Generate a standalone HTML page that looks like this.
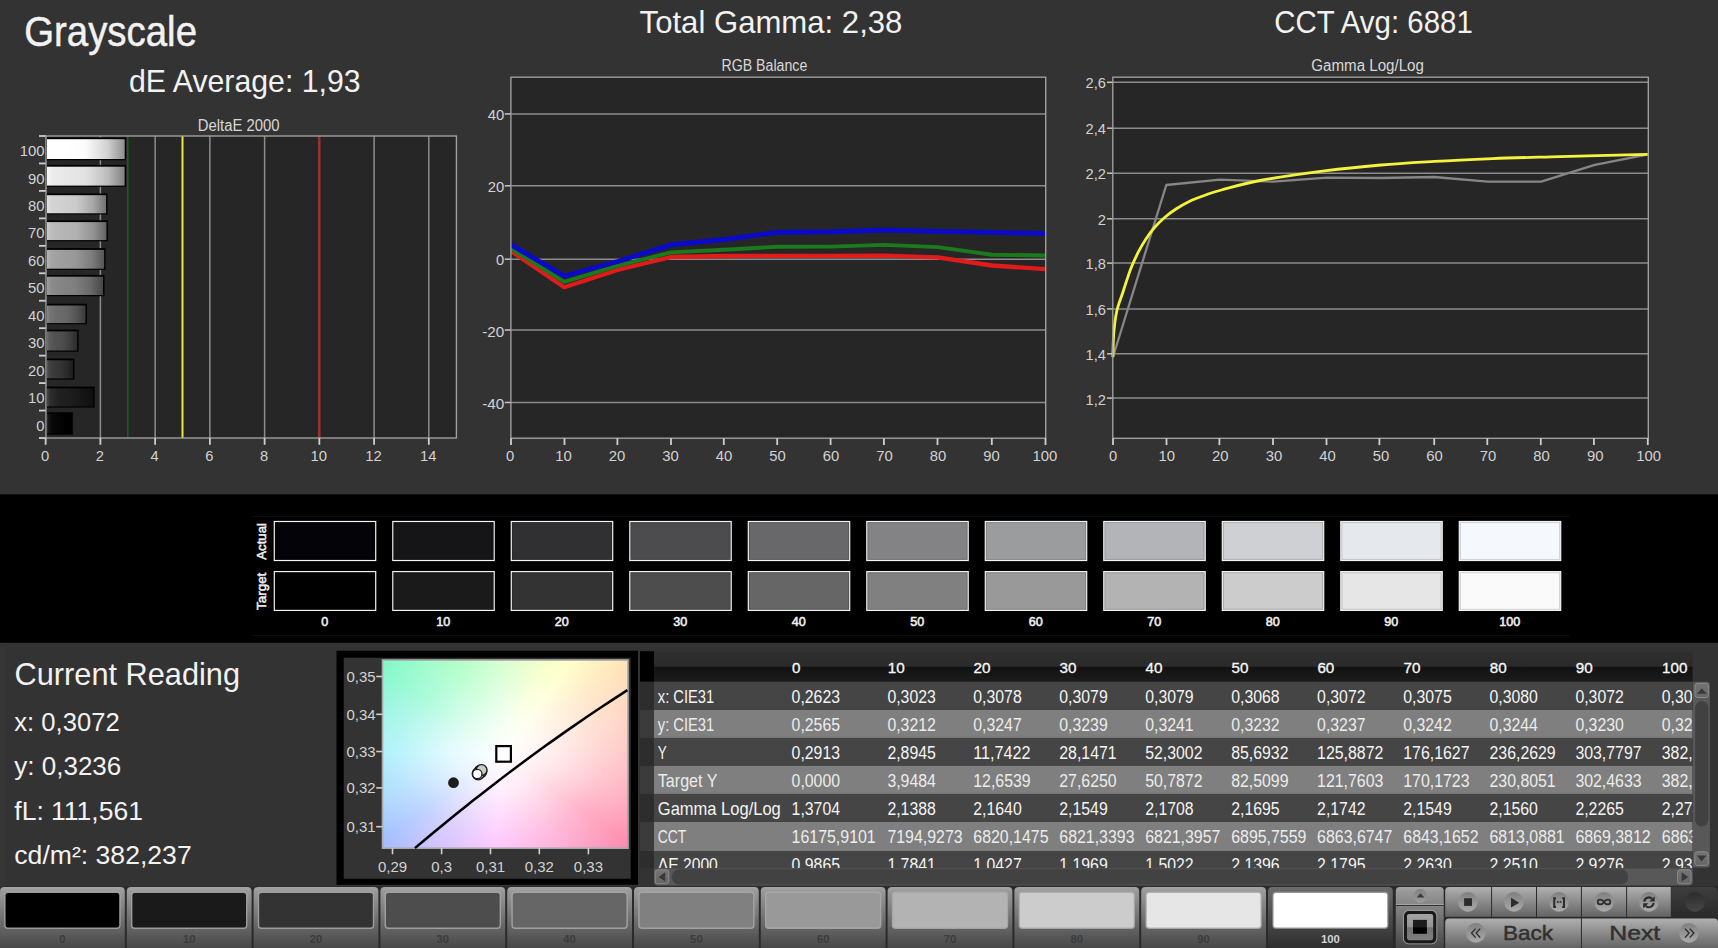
<!DOCTYPE html>
<html><head><meta charset="utf-8"><title>Grayscale</title>
<style>
html,body{margin:0;padding:0;background:#333333;}
body{width:1718px;height:948px;position:relative;overflow:hidden;font-family:"Liberation Sans", sans-serif;}
svg{position:absolute;left:0;top:0;}
svg text{font-family:"Liberation Sans", sans-serif;}
</style></head><body>
<div style="position:absolute;left:382px;top:660px;width:246px;height:188px;background:radial-gradient(ellipse 175px 135px at 49.3% 50%, rgba(255,255,255,1) 0%, rgba(255,255,255,0.8) 25%, rgba(255,255,255,0.36) 60%, rgba(255,255,255,0.0) 100%),conic-gradient(from 0deg at 49.3% 50%, #c8ffc0 0deg, #f4ffb8 25deg, #ffffbc 36deg, #ffe2b4 54deg, #ffb6b6 90deg, #ff88ac 125deg, #ff9cd0 150deg, #ffb4ff 185deg, #ccb4ff 215deg, #9cbcff 235deg, #92ecfc 270deg, #7cf8c8 305deg, #9cffb8 335deg, #c8ffc0 360deg);"></div>
<svg width="1718" height="948" viewBox="0 0 1718 948">
<defs>
<linearGradient id="bar100" x1="0" x2="1" y1="0" y2="0"><stop offset="0" stop-color="#ffffff"/><stop offset="0.07" stop-color="#ffffff"/><stop offset="0.25" stop-color="#ffffff"/><stop offset="0.5" stop-color="#fbfbfb"/><stop offset="0.78" stop-color="#d1d1d1"/><stop offset="1" stop-color="#8f8f8f"/></linearGradient>
<linearGradient id="bar90" x1="0" x2="1" y1="0" y2="0"><stop offset="0" stop-color="#f7f7f7"/><stop offset="0.07" stop-color="#ececec"/><stop offset="0.25" stop-color="#e8e8e8"/><stop offset="0.5" stop-color="#e2e2e2"/><stop offset="0.78" stop-color="#bcbcbc"/><stop offset="1" stop-color="#808080"/></linearGradient>
<linearGradient id="bar80" x1="0" x2="1" y1="0" y2="0"><stop offset="0" stop-color="#e1e1e1"/><stop offset="0.07" stop-color="#d5d5d5"/><stop offset="0.25" stop-color="#d0d0d0"/><stop offset="0.5" stop-color="#cacaca"/><stop offset="0.78" stop-color="#a7a7a7"/><stop offset="1" stop-color="#727272"/></linearGradient>
<linearGradient id="bar70" x1="0" x2="1" y1="0" y2="0"><stop offset="0" stop-color="#cbcbcb"/><stop offset="0.07" stop-color="#bcbcbc"/><stop offset="0.25" stop-color="#b6b6b6"/><stop offset="0.5" stop-color="#b1b1b1"/><stop offset="0.78" stop-color="#929292"/><stop offset="1" stop-color="#646464"/></linearGradient>
<linearGradient id="bar60" x1="0" x2="1" y1="0" y2="0"><stop offset="0" stop-color="#b5b5b5"/><stop offset="0.07" stop-color="#a5a5a5"/><stop offset="0.25" stop-color="#9e9e9e"/><stop offset="0.5" stop-color="#989898"/><stop offset="0.78" stop-color="#7d7d7d"/><stop offset="1" stop-color="#565656"/></linearGradient>
<linearGradient id="bar50" x1="0" x2="1" y1="0" y2="0"><stop offset="0" stop-color="#9e9e9e"/><stop offset="0.07" stop-color="#8c8c8c"/><stop offset="0.25" stop-color="#848484"/><stop offset="0.5" stop-color="#7f7f7f"/><stop offset="0.78" stop-color="#686868"/><stop offset="1" stop-color="#474747"/></linearGradient>
<linearGradient id="bar40" x1="0" x2="1" y1="0" y2="0"><stop offset="0" stop-color="#898989"/><stop offset="0.07" stop-color="#747474"/><stop offset="0.25" stop-color="#6c6c6c"/><stop offset="0.5" stop-color="#676767"/><stop offset="0.78" stop-color="#545454"/><stop offset="1" stop-color="#393939"/></linearGradient>
<linearGradient id="bar30" x1="0" x2="1" y1="0" y2="0"><stop offset="0" stop-color="#727272"/><stop offset="0.07" stop-color="#5c5c5c"/><stop offset="0.25" stop-color="#525252"/><stop offset="0.5" stop-color="#4e4e4e"/><stop offset="0.78" stop-color="#3e3e3e"/><stop offset="1" stop-color="#2b2b2b"/></linearGradient>
<linearGradient id="bar20" x1="0" x2="1" y1="0" y2="0"><stop offset="0" stop-color="#5c5c5c"/><stop offset="0.07" stop-color="#444444"/><stop offset="0.25" stop-color="#3a3a3a"/><stop offset="0.5" stop-color="#353535"/><stop offset="0.78" stop-color="#2a2a2a"/><stop offset="1" stop-color="#1d1d1d"/></linearGradient>
<linearGradient id="bar10" x1="0" x2="1" y1="0" y2="0"><stop offset="0" stop-color="#474747"/><stop offset="0.07" stop-color="#2d2d2d"/><stop offset="0.25" stop-color="#212121"/><stop offset="0.5" stop-color="#1d1d1d"/><stop offset="0.78" stop-color="#151515"/><stop offset="1" stop-color="#0f0f0f"/></linearGradient>
<linearGradient id="bar0" x1="0" x2="1" y1="0" y2="0"><stop offset="0" stop-color="#303030"/><stop offset="0.07" stop-color="#141414"/><stop offset="0.25" stop-color="#080808"/><stop offset="0.5" stop-color="#040404"/><stop offset="0.78" stop-color="#000000"/><stop offset="1" stop-color="#000000"/></linearGradient>
<linearGradient id="thdr" x1="0" x2="0" y1="0" y2="1"><stop offset="0" stop-color="#2f2f2f"/><stop offset="0.49" stop-color="#2a2a2a"/><stop offset="0.53" stop-color="#121212"/><stop offset="1" stop-color="#1c1c1c"/></linearGradient>
<linearGradient id="sbtn" x1="0" x2="0" y1="0" y2="1"><stop offset="0" stop-color="#747474"/><stop offset="1" stop-color="#666666"/></linearGradient>
<linearGradient id="tb" x1="0" x2="0" y1="0" y2="1"><stop offset="0" stop-color="#a4a4a4"/><stop offset="0.08" stop-color="#989898"/><stop offset="1" stop-color="#474747"/></linearGradient>
<linearGradient id="tbsel" x1="0" x2="0" y1="0" y2="1"><stop offset="0" stop-color="#6c6c6c"/><stop offset="1" stop-color="#2e2e2e"/></linearGradient>
<linearGradient id="knob" x1="0" x2="0" y1="0" y2="1"><stop offset="0" stop-color="#808080"/><stop offset="1" stop-color="#aaaaaa"/></linearGradient>
<linearGradient id="knob2" x1="0" x2="0" y1="0" y2="1"><stop offset="0" stop-color="#808080"/><stop offset="1" stop-color="#9c9c9c"/></linearGradient>
<linearGradient id="sq" x1="0" x2="0" y1="0" y2="1"><stop offset="0" stop-color="#a6a6a6"/><stop offset="0.5" stop-color="#949494"/><stop offset="0.52" stop-color="#727272"/><stop offset="1" stop-color="#808080"/></linearGradient>
<linearGradient id="tb2" x1="0" x2="0" y1="0" y2="1"><stop offset="0" stop-color="#b0b0b0"/><stop offset="1" stop-color="#646464"/></linearGradient>
<linearGradient id="dk" x1="0" x2="0" y1="0" y2="1"><stop offset="0" stop-color="#3e3e3e"/><stop offset="1" stop-color="#2a2a2a"/></linearGradient>
<linearGradient id="dkk" x1="0" x2="0" y1="0" y2="1"><stop offset="0" stop-color="#2c2c2c"/><stop offset="1" stop-color="#474747"/></linearGradient>
</defs>
<text x="24.2" y="45.6" font-size="43.00" fill="#f2f2f2" text-anchor="start" font-weight="normal" textLength="172.8" lengthAdjust="spacingAndGlyphs" stroke="#f2f2f2" stroke-width="0.5">Grayscale</text>
<text x="129.0" y="91.6" font-size="31.80" fill="#f2f2f2" text-anchor="start" font-weight="normal" textLength="231.6" lengthAdjust="spacingAndGlyphs">dE Average: 1,93</text>
<text x="639.6" y="32.6" font-size="31.80" fill="#f2f2f2" text-anchor="start" font-weight="normal" textLength="262.8" lengthAdjust="spacingAndGlyphs">Total Gamma: 2,38</text>
<text x="1274.2" y="32.6" font-size="31.80" fill="#f2f2f2" text-anchor="start" font-weight="normal" textLength="198.6" lengthAdjust="spacingAndGlyphs">CCT Avg: 6881</text>
<text x="197.8" y="131.0" font-size="15.60" fill="#d8d8d8" text-anchor="start" font-weight="normal" textLength="81.8" lengthAdjust="spacingAndGlyphs">DeltaE 2000</text>
<text x="721.5" y="70.8" font-size="15.60" fill="#d8d8d8" text-anchor="start" font-weight="normal" textLength="85.8" lengthAdjust="spacingAndGlyphs">RGB Balance</text>
<text x="1311.3" y="70.8" font-size="15.60" fill="#d8d8d8" text-anchor="start" font-weight="normal" textLength="112.6" lengthAdjust="spacingAndGlyphs">Gamma Log/Log</text>
<rect x="46.00" y="136.00" width="410.40" height="302.00" fill="#262626"/>
<line x1="100.39" y1="136.00" x2="100.39" y2="438.00" stroke="#8c8c8c" stroke-width="1.5"/>
<line x1="155.13" y1="136.00" x2="155.13" y2="438.00" stroke="#8c8c8c" stroke-width="1.5"/>
<line x1="209.87" y1="136.00" x2="209.87" y2="438.00" stroke="#8c8c8c" stroke-width="1.5"/>
<line x1="264.61" y1="136.00" x2="264.61" y2="438.00" stroke="#8c8c8c" stroke-width="1.5"/>
<line x1="319.35" y1="136.00" x2="319.35" y2="438.00" stroke="#8c8c8c" stroke-width="1.5"/>
<line x1="374.09" y1="136.00" x2="374.09" y2="438.00" stroke="#8c8c8c" stroke-width="1.5"/>
<line x1="428.83" y1="136.00" x2="428.83" y2="438.00" stroke="#8c8c8c" stroke-width="1.5"/>
<rect x="46.00" y="137.40" width="80.08" height="22.80" fill="#000"/>
<rect x="47.00" y="139.20" width="77.68" height="19.80" fill="url(#bar100)"/>
<text x="44.5" y="156.0" font-size="15.20" fill="#d2d2d2" text-anchor="end" font-weight="normal" textLength="24.8" lengthAdjust="spacingAndGlyphs">100</text>
<rect x="46.00" y="164.90" width="80.02" height="21.90" fill="#000"/>
<rect x="47.00" y="166.70" width="77.62" height="18.90" fill="url(#bar90)"/>
<text x="44.5" y="183.5" font-size="15.20" fill="#d2d2d2" text-anchor="end" font-weight="normal" textLength="16.5" lengthAdjust="spacingAndGlyphs">90</text>
<rect x="46.00" y="193.40" width="61.48" height="21.10" fill="#000"/>
<rect x="47.00" y="195.20" width="59.08" height="18.10" fill="url(#bar80)"/>
<text x="44.5" y="210.9" font-size="15.20" fill="#d2d2d2" text-anchor="end" font-weight="normal" textLength="16.5" lengthAdjust="spacingAndGlyphs">80</text>
<rect x="46.00" y="220.30" width="61.81" height="21.00" fill="#000"/>
<rect x="47.00" y="222.10" width="59.41" height="18.00" fill="url(#bar70)"/>
<text x="44.5" y="238.4" font-size="15.20" fill="#d2d2d2" text-anchor="end" font-weight="normal" textLength="16.5" lengthAdjust="spacingAndGlyphs">70</text>
<rect x="46.00" y="248.10" width="59.52" height="21.80" fill="#000"/>
<rect x="47.00" y="249.90" width="57.12" height="18.80" fill="url(#bar60)"/>
<text x="44.5" y="265.8" font-size="15.20" fill="#d2d2d2" text-anchor="end" font-weight="normal" textLength="16.5" lengthAdjust="spacingAndGlyphs">60</text>
<rect x="46.00" y="274.90" width="58.43" height="21.30" fill="#000"/>
<rect x="47.00" y="276.70" width="56.03" height="18.30" fill="url(#bar50)"/>
<text x="44.5" y="293.3" font-size="15.20" fill="#d2d2d2" text-anchor="end" font-weight="normal" textLength="16.5" lengthAdjust="spacingAndGlyphs">50</text>
<rect x="46.00" y="303.70" width="40.96" height="20.60" fill="#000"/>
<rect x="47.00" y="305.50" width="38.56" height="17.60" fill="url(#bar40)"/>
<text x="44.5" y="320.7" font-size="15.20" fill="#d2d2d2" text-anchor="end" font-weight="normal" textLength="16.5" lengthAdjust="spacingAndGlyphs">40</text>
<rect x="46.00" y="329.60" width="32.60" height="22.10" fill="#000"/>
<rect x="47.00" y="331.40" width="30.20" height="19.10" fill="url(#bar30)"/>
<text x="44.5" y="348.2" font-size="15.20" fill="#d2d2d2" text-anchor="end" font-weight="normal" textLength="16.5" lengthAdjust="spacingAndGlyphs">30</text>
<rect x="46.00" y="358.50" width="28.37" height="21.10" fill="#000"/>
<rect x="47.00" y="360.30" width="25.97" height="18.10" fill="url(#bar20)"/>
<text x="44.5" y="375.6" font-size="15.20" fill="#d2d2d2" text-anchor="end" font-weight="normal" textLength="16.5" lengthAdjust="spacingAndGlyphs">20</text>
<rect x="46.00" y="386.60" width="48.68" height="21.00" fill="#000"/>
<rect x="47.00" y="388.40" width="46.28" height="18.00" fill="url(#bar10)"/>
<text x="44.5" y="403.1" font-size="15.20" fill="#d2d2d2" text-anchor="end" font-weight="normal" textLength="16.5" lengthAdjust="spacingAndGlyphs">10</text>
<rect x="46.00" y="412.30" width="26.83" height="22.40" fill="#000"/>
<rect x="47.00" y="414.10" width="24.43" height="19.40" fill="url(#bar0)"/>
<text x="44.5" y="430.5" font-size="15.20" fill="#d2d2d2" text-anchor="end" font-weight="normal" textLength="8.2" lengthAdjust="spacingAndGlyphs">0</text>
<line x1="39.00" y1="136.00" x2="46.00" y2="136.00" stroke="#cfcfcf" stroke-width="1.8"/>
<line x1="39.00" y1="163.45" x2="46.00" y2="163.45" stroke="#cfcfcf" stroke-width="1.8"/>
<line x1="39.00" y1="190.91" x2="46.00" y2="190.91" stroke="#cfcfcf" stroke-width="1.8"/>
<line x1="39.00" y1="218.36" x2="46.00" y2="218.36" stroke="#cfcfcf" stroke-width="1.8"/>
<line x1="39.00" y1="245.82" x2="46.00" y2="245.82" stroke="#cfcfcf" stroke-width="1.8"/>
<line x1="39.00" y1="273.27" x2="46.00" y2="273.27" stroke="#cfcfcf" stroke-width="1.8"/>
<line x1="39.00" y1="300.73" x2="46.00" y2="300.73" stroke="#cfcfcf" stroke-width="1.8"/>
<line x1="39.00" y1="328.18" x2="46.00" y2="328.18" stroke="#cfcfcf" stroke-width="1.8"/>
<line x1="39.00" y1="355.64" x2="46.00" y2="355.64" stroke="#cfcfcf" stroke-width="1.8"/>
<line x1="39.00" y1="383.09" x2="46.00" y2="383.09" stroke="#cfcfcf" stroke-width="1.8"/>
<line x1="39.00" y1="410.55" x2="46.00" y2="410.55" stroke="#cfcfcf" stroke-width="1.8"/>
<line x1="39.00" y1="438.00" x2="46.00" y2="438.00" stroke="#cfcfcf" stroke-width="1.8"/>
<line x1="127.76" y1="136.00" x2="127.76" y2="438.00" stroke="#1e5c1e" stroke-width="1.6"/>
<line x1="182.50" y1="136.00" x2="182.50" y2="438.00" stroke="#e8e83a" stroke-width="2"/>
<line x1="319.35" y1="136.00" x2="319.35" y2="438.00" stroke="#bf2424" stroke-width="2"/>
<rect x="46.0" y="136.0" width="410.4" height="302.0" fill="none" stroke="#a2a2a2" stroke-width="1.35"/>
<line x1="45.65" y1="438.00" x2="45.65" y2="444.80" stroke="#cfcfcf" stroke-width="1.8"/>
<text x="45.1" y="460.8" font-size="15.20" fill="#d2d2d2" text-anchor="middle" font-weight="normal" textLength="8.2" lengthAdjust="spacingAndGlyphs">0</text>
<line x1="100.39" y1="438.00" x2="100.39" y2="444.80" stroke="#cfcfcf" stroke-width="1.8"/>
<text x="99.9" y="460.8" font-size="15.20" fill="#d2d2d2" text-anchor="middle" font-weight="normal" textLength="8.2" lengthAdjust="spacingAndGlyphs">2</text>
<line x1="155.13" y1="438.00" x2="155.13" y2="444.80" stroke="#cfcfcf" stroke-width="1.8"/>
<text x="154.6" y="460.8" font-size="15.20" fill="#d2d2d2" text-anchor="middle" font-weight="normal" textLength="8.2" lengthAdjust="spacingAndGlyphs">4</text>
<line x1="209.87" y1="438.00" x2="209.87" y2="444.80" stroke="#cfcfcf" stroke-width="1.8"/>
<text x="209.4" y="460.8" font-size="15.20" fill="#d2d2d2" text-anchor="middle" font-weight="normal" textLength="8.2" lengthAdjust="spacingAndGlyphs">6</text>
<line x1="264.61" y1="438.00" x2="264.61" y2="444.80" stroke="#cfcfcf" stroke-width="1.8"/>
<text x="264.1" y="460.8" font-size="15.20" fill="#d2d2d2" text-anchor="middle" font-weight="normal" textLength="8.2" lengthAdjust="spacingAndGlyphs">8</text>
<line x1="319.35" y1="438.00" x2="319.35" y2="444.80" stroke="#cfcfcf" stroke-width="1.8"/>
<text x="318.8" y="460.8" font-size="15.20" fill="#d2d2d2" text-anchor="middle" font-weight="normal" textLength="16.5" lengthAdjust="spacingAndGlyphs">10</text>
<line x1="374.09" y1="438.00" x2="374.09" y2="444.80" stroke="#cfcfcf" stroke-width="1.8"/>
<text x="373.6" y="460.8" font-size="15.20" fill="#d2d2d2" text-anchor="middle" font-weight="normal" textLength="16.5" lengthAdjust="spacingAndGlyphs">12</text>
<line x1="428.83" y1="438.00" x2="428.83" y2="444.80" stroke="#cfcfcf" stroke-width="1.8"/>
<text x="428.3" y="460.8" font-size="15.20" fill="#d2d2d2" text-anchor="middle" font-weight="normal" textLength="16.5" lengthAdjust="spacingAndGlyphs">14</text>
<rect x="510.90" y="77.20" width="534.80" height="361.00" fill="#262626"/>
<clipPath id="rgbclip"><rect x="510.9" y="77.2" width="534.8000000000001" height="361.0"/></clipPath>
<line x1="510.90" y1="113.90" x2="1045.70" y2="113.90" stroke="#8c8c8c" stroke-width="1.5"/>
<line x1="504.80" y1="113.90" x2="510.90" y2="113.90" stroke="#c8c8c8" stroke-width="1.5"/>
<text x="504.2" y="119.9" font-size="15.20" fill="#d2d2d2" text-anchor="end" font-weight="normal" textLength="16.5" lengthAdjust="spacingAndGlyphs">40</text>
<line x1="510.90" y1="185.80" x2="1045.70" y2="185.80" stroke="#8c8c8c" stroke-width="1.5"/>
<line x1="504.80" y1="185.80" x2="510.90" y2="185.80" stroke="#c8c8c8" stroke-width="1.5"/>
<text x="504.2" y="191.8" font-size="15.20" fill="#d2d2d2" text-anchor="end" font-weight="normal" textLength="16.5" lengthAdjust="spacingAndGlyphs">20</text>
<line x1="510.90" y1="259.20" x2="1045.70" y2="259.20" stroke="#8c8c8c" stroke-width="1.5"/>
<line x1="504.80" y1="259.20" x2="510.90" y2="259.20" stroke="#c8c8c8" stroke-width="1.5"/>
<text x="504.2" y="265.2" font-size="15.20" fill="#d2d2d2" text-anchor="end" font-weight="normal" textLength="8.2" lengthAdjust="spacingAndGlyphs">0</text>
<line x1="510.90" y1="330.00" x2="1045.70" y2="330.00" stroke="#8c8c8c" stroke-width="1.5"/>
<line x1="504.80" y1="330.00" x2="510.90" y2="330.00" stroke="#c8c8c8" stroke-width="1.5"/>
<text x="504.2" y="337.2" font-size="15.20" fill="#d2d2d2" text-anchor="end" font-weight="normal" textLength="22.0" lengthAdjust="spacingAndGlyphs">-20</text>
<line x1="510.90" y1="402.50" x2="1045.70" y2="402.50" stroke="#8c8c8c" stroke-width="1.5"/>
<line x1="504.80" y1="402.50" x2="510.90" y2="402.50" stroke="#c8c8c8" stroke-width="1.5"/>
<text x="504.2" y="409.4" font-size="15.20" fill="#d2d2d2" text-anchor="end" font-weight="normal" textLength="22.0" lengthAdjust="spacingAndGlyphs">-40</text>
<polyline points="510.9,251.0 564.3,287.3 617.4,270.0 671.0,257.0 724.0,256.0 777.4,255.9 830.8,255.8 884.1,255.7 937.7,257.3 991.8,265.5 1045.7,269.1" fill="none" stroke="#e01b1b" stroke-width="4.3" stroke-linejoin="round" clip-path="url(#rgbclip)"/>
<polyline points="510.9,248.6 564.3,281.8 617.4,265.8 671.0,252.4 724.0,249.8 777.4,246.8 830.8,246.6 884.1,244.9 937.7,247.1 991.8,254.7 1045.7,255.5" fill="none" stroke="#1b7a1b" stroke-width="3.9" stroke-linejoin="round" clip-path="url(#rgbclip)"/>
<polyline points="510.9,244.7 564.3,276.0 617.4,261.5 671.0,244.8 724.0,239.5 777.4,232.3 830.8,231.8 884.1,230.0 937.7,231.4 991.8,232.4 1045.7,233.5" fill="none" stroke="#0a0ac8" stroke-width="4.9" stroke-linejoin="round" clip-path="url(#rgbclip)"/>
<rect x="510.9" y="77.2" width="534.8000000000001" height="361.0" fill="none" stroke="#a2a2a2" stroke-width="1.35"/>
<line x1="511.00" y1="438.20" x2="511.00" y2="445.00" stroke="#cfcfcf" stroke-width="1.8"/>
<text x="510.1" y="461.0" font-size="15.20" fill="#d2d2d2" text-anchor="middle" font-weight="normal" textLength="8.2" lengthAdjust="spacingAndGlyphs">0</text>
<line x1="564.50" y1="438.20" x2="564.50" y2="445.00" stroke="#cfcfcf" stroke-width="1.8"/>
<text x="563.6" y="461.0" font-size="15.20" fill="#d2d2d2" text-anchor="middle" font-weight="normal" textLength="16.5" lengthAdjust="spacingAndGlyphs">10</text>
<line x1="617.40" y1="438.20" x2="617.40" y2="445.00" stroke="#cfcfcf" stroke-width="1.8"/>
<text x="617.1" y="461.0" font-size="15.20" fill="#d2d2d2" text-anchor="middle" font-weight="normal" textLength="16.5" lengthAdjust="spacingAndGlyphs">20</text>
<line x1="671.00" y1="438.20" x2="671.00" y2="445.00" stroke="#cfcfcf" stroke-width="1.8"/>
<text x="670.5" y="461.0" font-size="15.20" fill="#d2d2d2" text-anchor="middle" font-weight="normal" textLength="16.5" lengthAdjust="spacingAndGlyphs">30</text>
<line x1="723.80" y1="438.20" x2="723.80" y2="445.00" stroke="#cfcfcf" stroke-width="1.8"/>
<text x="724.0" y="461.0" font-size="15.20" fill="#d2d2d2" text-anchor="middle" font-weight="normal" textLength="16.5" lengthAdjust="spacingAndGlyphs">40</text>
<line x1="777.20" y1="438.20" x2="777.20" y2="445.00" stroke="#cfcfcf" stroke-width="1.8"/>
<text x="777.5" y="461.0" font-size="15.20" fill="#d2d2d2" text-anchor="middle" font-weight="normal" textLength="16.5" lengthAdjust="spacingAndGlyphs">50</text>
<line x1="830.60" y1="438.20" x2="830.60" y2="445.00" stroke="#cfcfcf" stroke-width="1.8"/>
<text x="831.0" y="461.0" font-size="15.20" fill="#d2d2d2" text-anchor="middle" font-weight="normal" textLength="16.5" lengthAdjust="spacingAndGlyphs">60</text>
<line x1="883.90" y1="438.20" x2="883.90" y2="445.00" stroke="#cfcfcf" stroke-width="1.8"/>
<text x="884.5" y="461.0" font-size="15.20" fill="#d2d2d2" text-anchor="middle" font-weight="normal" textLength="16.5" lengthAdjust="spacingAndGlyphs">70</text>
<line x1="937.50" y1="438.20" x2="937.50" y2="445.00" stroke="#cfcfcf" stroke-width="1.8"/>
<text x="937.9" y="461.0" font-size="15.20" fill="#d2d2d2" text-anchor="middle" font-weight="normal" textLength="16.5" lengthAdjust="spacingAndGlyphs">80</text>
<line x1="991.80" y1="438.20" x2="991.80" y2="445.00" stroke="#cfcfcf" stroke-width="1.8"/>
<text x="991.4" y="461.0" font-size="15.20" fill="#d2d2d2" text-anchor="middle" font-weight="normal" textLength="16.5" lengthAdjust="spacingAndGlyphs">90</text>
<line x1="1045.50" y1="438.20" x2="1045.50" y2="445.00" stroke="#cfcfcf" stroke-width="1.8"/>
<text x="1044.9" y="461.0" font-size="15.20" fill="#d2d2d2" text-anchor="middle" font-weight="normal" textLength="24.8" lengthAdjust="spacingAndGlyphs">100</text>
<rect x="1112.80" y="77.20" width="535.50" height="361.10" fill="#262626"/>
<line x1="1112.80" y1="82.30" x2="1648.30" y2="82.30" stroke="#8c8c8c" stroke-width="1.5"/>
<line x1="1107.00" y1="82.30" x2="1112.80" y2="82.30" stroke="#c8c8c8" stroke-width="1.5"/>
<text x="1105.9" y="88.2" font-size="15.20" fill="#d2d2d2" text-anchor="end" font-weight="normal" textLength="20.4" lengthAdjust="spacingAndGlyphs">2,6</text>
<line x1="1112.80" y1="128.20" x2="1648.30" y2="128.20" stroke="#8c8c8c" stroke-width="1.5"/>
<line x1="1107.00" y1="128.20" x2="1112.80" y2="128.20" stroke="#c8c8c8" stroke-width="1.5"/>
<text x="1105.9" y="134.1" font-size="15.20" fill="#d2d2d2" text-anchor="end" font-weight="normal" textLength="20.4" lengthAdjust="spacingAndGlyphs">2,4</text>
<line x1="1112.80" y1="173.20" x2="1648.30" y2="173.20" stroke="#8c8c8c" stroke-width="1.5"/>
<line x1="1107.00" y1="173.20" x2="1112.80" y2="173.20" stroke="#c8c8c8" stroke-width="1.5"/>
<text x="1105.9" y="179.1" font-size="15.20" fill="#d2d2d2" text-anchor="end" font-weight="normal" textLength="20.4" lengthAdjust="spacingAndGlyphs">2,2</text>
<line x1="1112.80" y1="218.80" x2="1648.30" y2="218.80" stroke="#8c8c8c" stroke-width="1.5"/>
<line x1="1107.00" y1="218.80" x2="1112.80" y2="218.80" stroke="#c8c8c8" stroke-width="1.5"/>
<text x="1105.9" y="224.7" font-size="15.20" fill="#d2d2d2" text-anchor="end" font-weight="normal" textLength="8.2" lengthAdjust="spacingAndGlyphs">2</text>
<line x1="1112.80" y1="263.10" x2="1648.30" y2="263.10" stroke="#8c8c8c" stroke-width="1.5"/>
<line x1="1107.00" y1="263.10" x2="1112.80" y2="263.10" stroke="#c8c8c8" stroke-width="1.5"/>
<text x="1105.9" y="269.0" font-size="15.20" fill="#d2d2d2" text-anchor="end" font-weight="normal" textLength="20.4" lengthAdjust="spacingAndGlyphs">1,8</text>
<line x1="1112.80" y1="308.90" x2="1648.30" y2="308.90" stroke="#8c8c8c" stroke-width="1.5"/>
<line x1="1107.00" y1="308.90" x2="1112.80" y2="308.90" stroke="#c8c8c8" stroke-width="1.5"/>
<text x="1105.9" y="314.8" font-size="15.20" fill="#d2d2d2" text-anchor="end" font-weight="normal" textLength="20.4" lengthAdjust="spacingAndGlyphs">1,6</text>
<line x1="1112.80" y1="353.80" x2="1648.30" y2="353.80" stroke="#8c8c8c" stroke-width="1.5"/>
<line x1="1107.00" y1="353.80" x2="1112.80" y2="353.80" stroke="#c8c8c8" stroke-width="1.5"/>
<text x="1105.9" y="359.7" font-size="15.20" fill="#d2d2d2" text-anchor="end" font-weight="normal" textLength="20.4" lengthAdjust="spacingAndGlyphs">1,4</text>
<line x1="1112.80" y1="398.10" x2="1648.30" y2="398.10" stroke="#8c8c8c" stroke-width="1.5"/>
<line x1="1107.00" y1="398.10" x2="1112.80" y2="398.10" stroke="#c8c8c8" stroke-width="1.5"/>
<text x="1105.9" y="405.1" font-size="15.20" fill="#d2d2d2" text-anchor="end" font-weight="normal" textLength="20.4" lengthAdjust="spacingAndGlyphs">1,2</text>
<polyline points="1112.8,357.5 1166.3,185.0 1219.9,179.6 1273.5,181.7 1327.0,177.7 1380.5,178.0 1434.1,177.0 1487.7,181.7 1541.2,181.7 1594.8,164.9 1648.3,154.4" fill="none" stroke="#868686" stroke-width="2.3" stroke-linejoin="round"/>
<path d="M1112.9,357.1 C1113.0,353.3 1113.1,341.9 1113.7,334.3 C1114.3,326.7 1115.2,318.5 1116.7,311.5 C1118.2,304.5 1120.5,299.5 1122.8,292.5 C1125.1,285.5 1127.9,276.3 1130.4,269.7 C1132.9,263.1 1135.5,257.8 1138.0,252.7 C1140.5,247.6 1142.9,243.5 1145.6,239.4 C1148.3,235.3 1150.9,231.7 1154.1,228.0 C1157.3,224.3 1160.9,220.7 1164.6,217.5 C1168.2,214.3 1171.9,211.7 1176.0,209.0 C1180.1,206.3 1184.2,203.8 1189.2,201.4 C1194.2,199.0 1200.9,196.6 1206.3,194.7 C1211.7,192.8 1212.5,192.4 1221.5,190.0 C1230.5,187.6 1242.5,183.7 1260.0,180.5 C1277.5,177.3 1306.2,173.3 1326.4,170.7 C1346.6,168.1 1363.0,166.6 1381.0,165.0 C1399.0,163.4 1416.0,162.5 1434.6,161.4 C1453.2,160.3 1473.4,159.4 1492.8,158.6 C1512.2,157.8 1533.5,157.3 1551.0,156.8 C1568.5,156.3 1581.5,156.0 1597.6,155.6 C1613.7,155.2 1639.3,154.6 1647.7,154.4" fill="none" stroke="#f4f43e" stroke-width="2.8" stroke-linecap="butt"/>
<rect x="1112.8" y="77.2" width="535.5" height="361.1" fill="none" stroke="#a2a2a2" stroke-width="1.35"/>
<line x1="1113.00" y1="438.30" x2="1113.00" y2="445.10" stroke="#cfcfcf" stroke-width="1.8"/>
<text x="1113.2" y="461.0" font-size="15.20" fill="#d2d2d2" text-anchor="middle" font-weight="normal" textLength="8.2" lengthAdjust="spacingAndGlyphs">0</text>
<line x1="1166.50" y1="438.30" x2="1166.50" y2="445.10" stroke="#cfcfcf" stroke-width="1.8"/>
<text x="1166.8" y="461.0" font-size="15.20" fill="#d2d2d2" text-anchor="middle" font-weight="normal" textLength="16.5" lengthAdjust="spacingAndGlyphs">10</text>
<line x1="1219.40" y1="438.30" x2="1219.40" y2="445.10" stroke="#cfcfcf" stroke-width="1.8"/>
<text x="1220.3" y="461.0" font-size="15.20" fill="#d2d2d2" text-anchor="middle" font-weight="normal" textLength="16.5" lengthAdjust="spacingAndGlyphs">20</text>
<line x1="1273.00" y1="438.30" x2="1273.00" y2="445.10" stroke="#cfcfcf" stroke-width="1.8"/>
<text x="1273.9" y="461.0" font-size="15.20" fill="#d2d2d2" text-anchor="middle" font-weight="normal" textLength="16.5" lengthAdjust="spacingAndGlyphs">30</text>
<line x1="1326.50" y1="438.30" x2="1326.50" y2="445.10" stroke="#cfcfcf" stroke-width="1.8"/>
<text x="1327.4" y="461.0" font-size="15.20" fill="#d2d2d2" text-anchor="middle" font-weight="normal" textLength="16.5" lengthAdjust="spacingAndGlyphs">40</text>
<line x1="1379.40" y1="438.30" x2="1379.40" y2="445.10" stroke="#cfcfcf" stroke-width="1.8"/>
<text x="1381.0" y="461.0" font-size="15.20" fill="#d2d2d2" text-anchor="middle" font-weight="normal" textLength="16.5" lengthAdjust="spacingAndGlyphs">50</text>
<line x1="1434.20" y1="438.30" x2="1434.20" y2="445.10" stroke="#cfcfcf" stroke-width="1.8"/>
<text x="1434.5" y="461.0" font-size="15.20" fill="#d2d2d2" text-anchor="middle" font-weight="normal" textLength="16.5" lengthAdjust="spacingAndGlyphs">60</text>
<line x1="1487.30" y1="438.30" x2="1487.30" y2="445.10" stroke="#cfcfcf" stroke-width="1.8"/>
<text x="1488.1" y="461.0" font-size="15.20" fill="#d2d2d2" text-anchor="middle" font-weight="normal" textLength="16.5" lengthAdjust="spacingAndGlyphs">70</text>
<line x1="1540.80" y1="438.30" x2="1540.80" y2="445.10" stroke="#cfcfcf" stroke-width="1.8"/>
<text x="1541.6" y="461.0" font-size="15.20" fill="#d2d2d2" text-anchor="middle" font-weight="normal" textLength="16.5" lengthAdjust="spacingAndGlyphs">80</text>
<line x1="1593.90" y1="438.30" x2="1593.90" y2="445.10" stroke="#cfcfcf" stroke-width="1.8"/>
<text x="1595.2" y="461.0" font-size="15.20" fill="#d2d2d2" text-anchor="middle" font-weight="normal" textLength="16.5" lengthAdjust="spacingAndGlyphs">90</text>
<line x1="1647.80" y1="438.30" x2="1647.80" y2="445.10" stroke="#cfcfcf" stroke-width="1.8"/>
<text x="1648.7" y="461.0" font-size="15.20" fill="#d2d2d2" text-anchor="middle" font-weight="normal" textLength="24.8" lengthAdjust="spacingAndGlyphs">100</text>
<rect x="0.00" y="494.30" width="1718.00" height="148.50" fill="#000"/>
<line x1="252.00" y1="516.50" x2="1570.00" y2="516.50" stroke="#0d0d0d" stroke-width="1"/>
<line x1="252.00" y1="635.50" x2="1570.00" y2="635.50" stroke="#0d0d0d" stroke-width="1"/>
<rect x="274.3" y="521.5" width="101.4" height="39.0" fill="#030308" stroke="#f4f4f4" stroke-width="1.2"/>
<rect x="274.3" y="571.6" width="101.4" height="38.8" fill="#000000" stroke="#f4f4f4" stroke-width="1.2"/>
<rect x="275.4" y="522.6" width="99.2" height="36.8" fill="none" stroke="#000" stroke-opacity="0.16" stroke-width="1"/>
<rect x="275.4" y="572.7" width="99.2" height="36.6" fill="none" stroke="#000" stroke-opacity="0.16" stroke-width="1"/>
<text x="324.7" y="625.9" font-size="12.20" fill="#f0f0f0" text-anchor="middle" font-weight="normal" textLength="7.0" lengthAdjust="spacingAndGlyphs" stroke="#f0f0f0" stroke-width="0.55">0</text>
<rect x="392.8" y="521.5" width="101.4" height="39.0" fill="#151517" stroke="#f4f4f4" stroke-width="1.2"/>
<rect x="392.8" y="571.6" width="101.4" height="38.8" fill="#1a1a1a" stroke="#f4f4f4" stroke-width="1.2"/>
<rect x="393.9" y="522.6" width="99.2" height="36.8" fill="none" stroke="#000" stroke-opacity="0.16" stroke-width="1"/>
<rect x="393.9" y="572.7" width="99.2" height="36.6" fill="none" stroke="#000" stroke-opacity="0.16" stroke-width="1"/>
<text x="443.2" y="625.9" font-size="12.20" fill="#f0f0f0" text-anchor="middle" font-weight="normal" textLength="14.0" lengthAdjust="spacingAndGlyphs" stroke="#f0f0f0" stroke-width="0.55">10</text>
<rect x="511.3" y="521.5" width="101.4" height="39.0" fill="#303032" stroke="#f4f4f4" stroke-width="1.2"/>
<rect x="511.3" y="571.6" width="101.4" height="38.8" fill="#333333" stroke="#f4f4f4" stroke-width="1.2"/>
<rect x="512.4" y="522.6" width="99.2" height="36.8" fill="none" stroke="#000" stroke-opacity="0.16" stroke-width="1"/>
<rect x="512.4" y="572.7" width="99.2" height="36.6" fill="none" stroke="#000" stroke-opacity="0.16" stroke-width="1"/>
<text x="561.7" y="625.9" font-size="12.20" fill="#f0f0f0" text-anchor="middle" font-weight="normal" textLength="14.0" lengthAdjust="spacingAndGlyphs" stroke="#f0f0f0" stroke-width="0.55">20</text>
<rect x="629.8" y="521.5" width="101.4" height="39.0" fill="#4c4c4e" stroke="#f4f4f4" stroke-width="1.2"/>
<rect x="629.8" y="571.6" width="101.4" height="38.8" fill="#4d4d4d" stroke="#f4f4f4" stroke-width="1.2"/>
<rect x="630.9" y="522.6" width="99.2" height="36.8" fill="none" stroke="#000" stroke-opacity="0.16" stroke-width="1"/>
<rect x="630.9" y="572.7" width="99.2" height="36.6" fill="none" stroke="#000" stroke-opacity="0.16" stroke-width="1"/>
<text x="680.2" y="625.9" font-size="12.20" fill="#f0f0f0" text-anchor="middle" font-weight="normal" textLength="14.0" lengthAdjust="spacingAndGlyphs" stroke="#f0f0f0" stroke-width="0.55">30</text>
<rect x="748.3" y="521.5" width="101.4" height="39.0" fill="#68686a" stroke="#f4f4f4" stroke-width="1.2"/>
<rect x="748.3" y="571.6" width="101.4" height="38.8" fill="#666666" stroke="#f4f4f4" stroke-width="1.2"/>
<rect x="749.4" y="522.6" width="99.2" height="36.8" fill="none" stroke="#000" stroke-opacity="0.16" stroke-width="1"/>
<rect x="749.4" y="572.7" width="99.2" height="36.6" fill="none" stroke="#000" stroke-opacity="0.16" stroke-width="1"/>
<text x="798.7" y="625.9" font-size="12.20" fill="#f0f0f0" text-anchor="middle" font-weight="normal" textLength="14.0" lengthAdjust="spacingAndGlyphs" stroke="#f0f0f0" stroke-width="0.55">40</text>
<rect x="866.8" y="521.5" width="101.4" height="39.0" fill="#838386" stroke="#f4f4f4" stroke-width="1.2"/>
<rect x="866.8" y="571.6" width="101.4" height="38.8" fill="#808080" stroke="#f4f4f4" stroke-width="1.2"/>
<rect x="867.9" y="522.6" width="99.2" height="36.8" fill="none" stroke="#000" stroke-opacity="0.16" stroke-width="1"/>
<rect x="867.9" y="572.7" width="99.2" height="36.6" fill="none" stroke="#000" stroke-opacity="0.16" stroke-width="1"/>
<text x="917.2" y="625.9" font-size="12.20" fill="#f0f0f0" text-anchor="middle" font-weight="normal" textLength="14.0" lengthAdjust="spacingAndGlyphs" stroke="#f0f0f0" stroke-width="0.55">50</text>
<rect x="985.3" y="521.5" width="101.4" height="39.0" fill="#9a9c9e" stroke="#f4f4f4" stroke-width="1.2"/>
<rect x="985.3" y="571.6" width="101.4" height="38.8" fill="#999999" stroke="#f4f4f4" stroke-width="1.2"/>
<rect x="986.4" y="522.6" width="99.2" height="36.8" fill="none" stroke="#000" stroke-opacity="0.16" stroke-width="1"/>
<rect x="986.4" y="572.7" width="99.2" height="36.6" fill="none" stroke="#000" stroke-opacity="0.16" stroke-width="1"/>
<text x="1035.7" y="625.9" font-size="12.20" fill="#f0f0f0" text-anchor="middle" font-weight="normal" textLength="14.0" lengthAdjust="spacingAndGlyphs" stroke="#f0f0f0" stroke-width="0.55">60</text>
<rect x="1103.8" y="521.5" width="101.4" height="39.0" fill="#b2b4b7" stroke="#f4f4f4" stroke-width="1.2"/>
<rect x="1103.8" y="571.6" width="101.4" height="38.8" fill="#b3b3b3" stroke="#f4f4f4" stroke-width="1.2"/>
<rect x="1104.9" y="522.6" width="99.2" height="36.8" fill="none" stroke="#000" stroke-opacity="0.16" stroke-width="1"/>
<rect x="1104.9" y="572.7" width="99.2" height="36.6" fill="none" stroke="#000" stroke-opacity="0.16" stroke-width="1"/>
<text x="1154.2" y="625.9" font-size="12.20" fill="#f0f0f0" text-anchor="middle" font-weight="normal" textLength="14.0" lengthAdjust="spacingAndGlyphs" stroke="#f0f0f0" stroke-width="0.55">70</text>
<rect x="1222.3" y="521.5" width="101.4" height="39.0" fill="#cfd0d3" stroke="#f4f4f4" stroke-width="1.2"/>
<rect x="1222.3" y="571.6" width="101.4" height="38.8" fill="#cccccc" stroke="#f4f4f4" stroke-width="1.2"/>
<rect x="1223.4" y="522.6" width="99.2" height="36.8" fill="none" stroke="#000" stroke-opacity="0.16" stroke-width="1"/>
<rect x="1223.4" y="572.7" width="99.2" height="36.6" fill="none" stroke="#000" stroke-opacity="0.16" stroke-width="1"/>
<text x="1272.7" y="625.9" font-size="12.20" fill="#f0f0f0" text-anchor="middle" font-weight="normal" textLength="14.0" lengthAdjust="spacingAndGlyphs" stroke="#f0f0f0" stroke-width="0.55">80</text>
<rect x="1340.8" y="521.5" width="101.4" height="39.0" fill="#e5e8ec" stroke="#f4f4f4" stroke-width="1.2"/>
<rect x="1340.8" y="571.6" width="101.4" height="38.8" fill="#e6e6e6" stroke="#f4f4f4" stroke-width="1.2"/>
<rect x="1341.9" y="522.6" width="99.2" height="36.8" fill="none" stroke="#000" stroke-opacity="0.16" stroke-width="1"/>
<rect x="1341.9" y="572.7" width="99.2" height="36.6" fill="none" stroke="#000" stroke-opacity="0.16" stroke-width="1"/>
<text x="1391.2" y="625.9" font-size="12.20" fill="#f0f0f0" text-anchor="middle" font-weight="normal" textLength="14.0" lengthAdjust="spacingAndGlyphs" stroke="#f0f0f0" stroke-width="0.55">90</text>
<rect x="1459.3" y="521.5" width="101.4" height="39.0" fill="#f5f8fd" stroke="#f4f4f4" stroke-width="1.2"/>
<rect x="1459.3" y="571.6" width="101.4" height="38.8" fill="#fafafa" stroke="#f4f4f4" stroke-width="1.2"/>
<rect x="1460.4" y="522.6" width="99.2" height="36.8" fill="none" stroke="#000" stroke-opacity="0.16" stroke-width="1"/>
<rect x="1460.4" y="572.7" width="99.2" height="36.6" fill="none" stroke="#000" stroke-opacity="0.16" stroke-width="1"/>
<text x="1509.7" y="625.9" font-size="12.20" fill="#f0f0f0" text-anchor="middle" font-weight="normal" textLength="21.0" lengthAdjust="spacingAndGlyphs" stroke="#f0f0f0" stroke-width="0.55">100</text>
<text transform="translate(266.3,559.8) rotate(-90)" font-size="12.6" fill="#f0f0f0" stroke="#f0f0f0" stroke-width="0.5" textLength="36.8" lengthAdjust="spacingAndGlyphs">Actual</text>
<text transform="translate(266.3,609.9) rotate(-90)" font-size="12.6" fill="#f0f0f0" stroke="#f0f0f0" stroke-width="0.5" textLength="37.2" lengthAdjust="spacingAndGlyphs">Target</text>
<rect x="0.00" y="647.00" width="5.50" height="240.00" fill="#363636"/>
<text x="14.6" y="684.8" font-size="31.80" fill="#f2f2f2" text-anchor="start" font-weight="normal" textLength="225.4" lengthAdjust="spacingAndGlyphs">Current Reading</text>
<text x="14.3" y="731.0" font-size="26.40" fill="#f2f2f2" text-anchor="start" font-weight="normal" textLength="105.4" lengthAdjust="spacingAndGlyphs">x: 0,3072</text>
<text x="14.3" y="774.8" font-size="26.40" fill="#f2f2f2" text-anchor="start" font-weight="normal" textLength="107.0" lengthAdjust="spacingAndGlyphs">y: 0,3236</text>
<text x="14.3" y="819.9" font-size="26.40" fill="#f2f2f2" text-anchor="start" font-weight="normal" textLength="128.6" lengthAdjust="spacingAndGlyphs">fL: 111,561</text>
<text x="14.3" y="864.1" font-size="26.40" fill="#f2f2f2" text-anchor="start" font-weight="normal" textLength="177.4" lengthAdjust="spacingAndGlyphs">cd/m²: 382,237</text>
<path fill-rule="evenodd" fill="#000" d="M336.5,650.7H638V884.8H336.5Z M343.7,657.8V878.8H630.7V657.8Z"/>
<rect x="382.5" y="660.0" width="245.5" height="188.19999999999996" fill="none" stroke="#a8a8a8" stroke-width="1.6"/>
<line x1="376.20" y1="676.50" x2="382.50" y2="676.50" stroke="#cfcfcf" stroke-width="1.6"/>
<text x="375.7" y="681.7" font-size="15.20" fill="#d2d2d2" text-anchor="end" font-weight="normal" textLength="29.2" lengthAdjust="spacingAndGlyphs">0,35</text>
<line x1="376.20" y1="714.30" x2="382.50" y2="714.30" stroke="#cfcfcf" stroke-width="1.6"/>
<text x="375.7" y="719.5" font-size="15.20" fill="#d2d2d2" text-anchor="end" font-weight="normal" textLength="29.2" lengthAdjust="spacingAndGlyphs">0,34</text>
<line x1="376.20" y1="751.50" x2="382.50" y2="751.50" stroke="#cfcfcf" stroke-width="1.6"/>
<text x="375.7" y="756.7" font-size="15.20" fill="#d2d2d2" text-anchor="end" font-weight="normal" textLength="29.2" lengthAdjust="spacingAndGlyphs">0,33</text>
<line x1="376.20" y1="787.90" x2="382.50" y2="787.90" stroke="#cfcfcf" stroke-width="1.6"/>
<text x="375.7" y="793.1" font-size="15.20" fill="#d2d2d2" text-anchor="end" font-weight="normal" textLength="29.2" lengthAdjust="spacingAndGlyphs">0,32</text>
<line x1="376.20" y1="826.70" x2="382.50" y2="826.70" stroke="#cfcfcf" stroke-width="1.6"/>
<text x="375.7" y="831.9" font-size="15.20" fill="#d2d2d2" text-anchor="end" font-weight="normal" textLength="29.2" lengthAdjust="spacingAndGlyphs">0,31</text>
<line x1="392.50" y1="847.80" x2="392.50" y2="854.30" stroke="#cfcfcf" stroke-width="1.6"/>
<text x="392.5" y="871.9" font-size="15.20" fill="#d2d2d2" text-anchor="middle" font-weight="normal" textLength="29.2" lengthAdjust="spacingAndGlyphs">0,29</text>
<line x1="441.60" y1="847.80" x2="441.60" y2="854.30" stroke="#cfcfcf" stroke-width="1.6"/>
<text x="441.6" y="871.9" font-size="15.20" fill="#d2d2d2" text-anchor="middle" font-weight="normal" textLength="20.8" lengthAdjust="spacingAndGlyphs">0,3</text>
<line x1="490.50" y1="847.80" x2="490.50" y2="854.30" stroke="#cfcfcf" stroke-width="1.6"/>
<text x="490.5" y="871.9" font-size="15.20" fill="#d2d2d2" text-anchor="middle" font-weight="normal" textLength="29.2" lengthAdjust="spacingAndGlyphs">0,31</text>
<line x1="539.30" y1="847.80" x2="539.30" y2="854.30" stroke="#cfcfcf" stroke-width="1.6"/>
<text x="539.3" y="871.9" font-size="15.20" fill="#d2d2d2" text-anchor="middle" font-weight="normal" textLength="29.2" lengthAdjust="spacingAndGlyphs">0,32</text>
<line x1="588.40" y1="847.80" x2="588.40" y2="854.30" stroke="#cfcfcf" stroke-width="1.6"/>
<text x="588.4" y="871.9" font-size="15.20" fill="#d2d2d2" text-anchor="middle" font-weight="normal" textLength="29.2" lengthAdjust="spacingAndGlyphs">0,33</text>
<path d="M414.9,848.1 C419.3,844.4 432.4,833.4 441.2,826.2 C450.0,819.0 458.9,811.8 467.8,804.7 C476.7,797.7 485.5,790.7 494.4,783.9 C503.3,777.1 512.1,770.4 521.0,763.8 C529.9,757.2 538.7,750.7 547.6,744.3 C556.5,738.0 565.3,731.7 574.2,725.6 C583.1,719.4 591.9,713.4 600.8,707.5 C609.7,701.6 623.0,693.0 627.4,690.1" fill="none" stroke="#000" stroke-width="2.5"/>
<circle cx="453.5" cy="782.7" r="5.4" fill="#1c1c1c"/>
<circle cx="480.5" cy="771.5" r="6.3" fill="#8c8c8c" stroke="#1c1c1c" stroke-width="1.3"/>
<circle cx="478.2" cy="773.8" r="6.0" fill="#b8b8b8" stroke="#1c1c1c" stroke-width="1.3"/>
<circle cx="481.6" cy="770.0" r="5.4" fill="#cacaca" stroke="#1c1c1c" stroke-width="1.3"/>
<circle cx="477.3" cy="774.0" r="4.7" fill="#ffffff" stroke="#1c1c1c" stroke-width="1.3"/>
<rect x="496.3" y="746.1" width="14.6" height="15.6" fill="#fff" stroke="#000" stroke-width="2.2"/>
<rect x="640.00" y="651.20" width="14.00" height="30.60" fill="#000"/>
<rect x="654.00" y="651.20" width="1038.80" height="30.60" fill="url(#thdr)"/>
<clipPath id="tclip"><rect x="640" y="651" width="1052.8" height="217"/></clipPath>
<g clip-path="url(#tclip)">
<text x="791.9" y="672.8" font-size="15.20" fill="#f6f6f6" text-anchor="start" font-weight="normal" textLength="8.4" lengthAdjust="spacingAndGlyphs" stroke="#f6f6f6" stroke-width="0.35">0</text>
<text x="887.7" y="672.8" font-size="15.20" fill="#f6f6f6" text-anchor="start" font-weight="normal" textLength="16.9" lengthAdjust="spacingAndGlyphs" stroke="#f6f6f6" stroke-width="0.35">10</text>
<text x="973.6" y="672.8" font-size="15.20" fill="#f6f6f6" text-anchor="start" font-weight="normal" textLength="16.9" lengthAdjust="spacingAndGlyphs" stroke="#f6f6f6" stroke-width="0.35">20</text>
<text x="1059.6" y="672.8" font-size="15.20" fill="#f6f6f6" text-anchor="start" font-weight="normal" textLength="16.9" lengthAdjust="spacingAndGlyphs" stroke="#f6f6f6" stroke-width="0.35">30</text>
<text x="1145.5" y="672.8" font-size="15.20" fill="#f6f6f6" text-anchor="start" font-weight="normal" textLength="16.9" lengthAdjust="spacingAndGlyphs" stroke="#f6f6f6" stroke-width="0.35">40</text>
<text x="1231.5" y="672.8" font-size="15.20" fill="#f6f6f6" text-anchor="start" font-weight="normal" textLength="16.9" lengthAdjust="spacingAndGlyphs" stroke="#f6f6f6" stroke-width="0.35">50</text>
<text x="1317.4" y="672.8" font-size="15.20" fill="#f6f6f6" text-anchor="start" font-weight="normal" textLength="16.9" lengthAdjust="spacingAndGlyphs" stroke="#f6f6f6" stroke-width="0.35">60</text>
<text x="1403.6" y="672.8" font-size="15.20" fill="#f6f6f6" text-anchor="start" font-weight="normal" textLength="16.9" lengthAdjust="spacingAndGlyphs" stroke="#f6f6f6" stroke-width="0.35">70</text>
<text x="1489.8" y="672.8" font-size="15.20" fill="#f6f6f6" text-anchor="start" font-weight="normal" textLength="16.9" lengthAdjust="spacingAndGlyphs" stroke="#f6f6f6" stroke-width="0.35">80</text>
<text x="1575.7" y="672.8" font-size="15.20" fill="#f6f6f6" text-anchor="start" font-weight="normal" textLength="16.9" lengthAdjust="spacingAndGlyphs" stroke="#f6f6f6" stroke-width="0.35">90</text>
<text x="1662.1" y="672.8" font-size="15.20" fill="#f6f6f6" text-anchor="start" font-weight="normal" textLength="25.3" lengthAdjust="spacingAndGlyphs" stroke="#f6f6f6" stroke-width="0.35">100</text>
<rect x="640.00" y="681.80" width="14.00" height="29.40" fill="#2d2d2d"/>
<rect x="654.00" y="681.80" width="1038.80" height="29.40" fill="#454545"/>
<text x="657.8" y="702.9" font-size="17.90" fill="#f4f4f4" text-anchor="start" font-weight="normal" textLength="56.4" lengthAdjust="spacingAndGlyphs">x: CIE31</text>
<text x="791.6" y="702.9" font-size="17.60" fill="#f4f4f4" text-anchor="start" font-weight="normal" textLength="48.4" lengthAdjust="spacingAndGlyphs">0,2623</text>
<text x="887.4" y="702.9" font-size="17.60" fill="#f4f4f4" text-anchor="start" font-weight="normal" textLength="48.4" lengthAdjust="spacingAndGlyphs">0,3023</text>
<text x="973.3" y="702.9" font-size="17.60" fill="#f4f4f4" text-anchor="start" font-weight="normal" textLength="48.4" lengthAdjust="spacingAndGlyphs">0,3078</text>
<text x="1059.3" y="702.9" font-size="17.60" fill="#f4f4f4" text-anchor="start" font-weight="normal" textLength="48.4" lengthAdjust="spacingAndGlyphs">0,3079</text>
<text x="1145.2" y="702.9" font-size="17.60" fill="#f4f4f4" text-anchor="start" font-weight="normal" textLength="48.4" lengthAdjust="spacingAndGlyphs">0,3079</text>
<text x="1231.2" y="702.9" font-size="17.60" fill="#f4f4f4" text-anchor="start" font-weight="normal" textLength="48.4" lengthAdjust="spacingAndGlyphs">0,3068</text>
<text x="1317.1" y="702.9" font-size="17.60" fill="#f4f4f4" text-anchor="start" font-weight="normal" textLength="48.4" lengthAdjust="spacingAndGlyphs">0,3072</text>
<text x="1403.3" y="702.9" font-size="17.60" fill="#f4f4f4" text-anchor="start" font-weight="normal" textLength="48.4" lengthAdjust="spacingAndGlyphs">0,3075</text>
<text x="1489.5" y="702.9" font-size="17.60" fill="#f4f4f4" text-anchor="start" font-weight="normal" textLength="48.4" lengthAdjust="spacingAndGlyphs">0,3080</text>
<text x="1575.4" y="702.9" font-size="17.60" fill="#f4f4f4" text-anchor="start" font-weight="normal" textLength="48.4" lengthAdjust="spacingAndGlyphs">0,3072</text>
<text x="1661.8" y="702.9" font-size="17.60" fill="#f4f4f4" text-anchor="start" font-weight="normal" textLength="48.4" lengthAdjust="spacingAndGlyphs">0,3072</text>
<rect x="640.00" y="710.00" width="14.00" height="29.40" fill="#3b3b3b"/>
<rect x="654.00" y="710.00" width="1038.80" height="29.40" fill="#7f7f7f"/>
<text x="657.8" y="730.9" font-size="17.90" fill="#ececec" text-anchor="start" font-weight="normal" textLength="56.4" lengthAdjust="spacingAndGlyphs">y: CIE31</text>
<text x="791.6" y="730.9" font-size="17.60" fill="#ececec" text-anchor="start" font-weight="normal" textLength="48.4" lengthAdjust="spacingAndGlyphs">0,2565</text>
<text x="887.4" y="730.9" font-size="17.60" fill="#ececec" text-anchor="start" font-weight="normal" textLength="48.4" lengthAdjust="spacingAndGlyphs">0,3212</text>
<text x="973.3" y="730.9" font-size="17.60" fill="#ececec" text-anchor="start" font-weight="normal" textLength="48.4" lengthAdjust="spacingAndGlyphs">0,3247</text>
<text x="1059.3" y="730.9" font-size="17.60" fill="#ececec" text-anchor="start" font-weight="normal" textLength="48.4" lengthAdjust="spacingAndGlyphs">0,3239</text>
<text x="1145.2" y="730.9" font-size="17.60" fill="#ececec" text-anchor="start" font-weight="normal" textLength="48.4" lengthAdjust="spacingAndGlyphs">0,3241</text>
<text x="1231.2" y="730.9" font-size="17.60" fill="#ececec" text-anchor="start" font-weight="normal" textLength="48.4" lengthAdjust="spacingAndGlyphs">0,3232</text>
<text x="1317.1" y="730.9" font-size="17.60" fill="#ececec" text-anchor="start" font-weight="normal" textLength="48.4" lengthAdjust="spacingAndGlyphs">0,3237</text>
<text x="1403.3" y="730.9" font-size="17.60" fill="#ececec" text-anchor="start" font-weight="normal" textLength="48.4" lengthAdjust="spacingAndGlyphs">0,3242</text>
<text x="1489.5" y="730.9" font-size="17.60" fill="#ececec" text-anchor="start" font-weight="normal" textLength="48.4" lengthAdjust="spacingAndGlyphs">0,3244</text>
<text x="1575.4" y="730.9" font-size="17.60" fill="#ececec" text-anchor="start" font-weight="normal" textLength="48.4" lengthAdjust="spacingAndGlyphs">0,3230</text>
<text x="1661.8" y="730.9" font-size="17.60" fill="#ececec" text-anchor="start" font-weight="normal" textLength="48.4" lengthAdjust="spacingAndGlyphs">0,3236</text>
<rect x="640.00" y="737.90" width="14.00" height="29.40" fill="#2d2d2d"/>
<rect x="654.00" y="737.90" width="1038.80" height="29.40" fill="#454545"/>
<text x="657.8" y="758.9" font-size="17.90" fill="#f4f4f4" text-anchor="start" font-weight="normal" textLength="9.0" lengthAdjust="spacingAndGlyphs">Y</text>
<text x="791.6" y="758.9" font-size="17.60" fill="#f4f4f4" text-anchor="start" font-weight="normal" textLength="48.4" lengthAdjust="spacingAndGlyphs">0,2913</text>
<text x="887.4" y="758.9" font-size="17.60" fill="#f4f4f4" text-anchor="start" font-weight="normal" textLength="48.4" lengthAdjust="spacingAndGlyphs">2,8945</text>
<text x="973.3" y="758.9" font-size="17.60" fill="#f4f4f4" text-anchor="start" font-weight="normal" textLength="57.3" lengthAdjust="spacingAndGlyphs">11,7422</text>
<text x="1059.3" y="758.9" font-size="17.60" fill="#f4f4f4" text-anchor="start" font-weight="normal" textLength="57.3" lengthAdjust="spacingAndGlyphs">28,1471</text>
<text x="1145.2" y="758.9" font-size="17.60" fill="#f4f4f4" text-anchor="start" font-weight="normal" textLength="57.3" lengthAdjust="spacingAndGlyphs">52,3002</text>
<text x="1231.2" y="758.9" font-size="17.60" fill="#f4f4f4" text-anchor="start" font-weight="normal" textLength="57.3" lengthAdjust="spacingAndGlyphs">85,6932</text>
<text x="1317.1" y="758.9" font-size="17.60" fill="#f4f4f4" text-anchor="start" font-weight="normal" textLength="66.2" lengthAdjust="spacingAndGlyphs">125,8872</text>
<text x="1403.3" y="758.9" font-size="17.60" fill="#f4f4f4" text-anchor="start" font-weight="normal" textLength="66.2" lengthAdjust="spacingAndGlyphs">176,1627</text>
<text x="1489.5" y="758.9" font-size="17.60" fill="#f4f4f4" text-anchor="start" font-weight="normal" textLength="66.2" lengthAdjust="spacingAndGlyphs">236,2629</text>
<text x="1575.4" y="758.9" font-size="17.60" fill="#f4f4f4" text-anchor="start" font-weight="normal" textLength="66.2" lengthAdjust="spacingAndGlyphs">303,7797</text>
<text x="1661.8" y="758.9" font-size="17.60" fill="#f4f4f4" text-anchor="start" font-weight="normal" textLength="66.2" lengthAdjust="spacingAndGlyphs">382,2370</text>
<rect x="640.00" y="765.90" width="14.00" height="29.40" fill="#3b3b3b"/>
<rect x="654.00" y="765.90" width="1038.80" height="29.40" fill="#7f7f7f"/>
<text x="657.8" y="786.9" font-size="17.90" fill="#ececec" text-anchor="start" font-weight="normal" textLength="59.6" lengthAdjust="spacingAndGlyphs">Target Y</text>
<text x="791.6" y="786.9" font-size="17.60" fill="#ececec" text-anchor="start" font-weight="normal" textLength="48.4" lengthAdjust="spacingAndGlyphs">0,0000</text>
<text x="887.4" y="786.9" font-size="17.60" fill="#ececec" text-anchor="start" font-weight="normal" textLength="48.4" lengthAdjust="spacingAndGlyphs">3,9484</text>
<text x="973.3" y="786.9" font-size="17.60" fill="#ececec" text-anchor="start" font-weight="normal" textLength="57.3" lengthAdjust="spacingAndGlyphs">12,6539</text>
<text x="1059.3" y="786.9" font-size="17.60" fill="#ececec" text-anchor="start" font-weight="normal" textLength="57.3" lengthAdjust="spacingAndGlyphs">27,6250</text>
<text x="1145.2" y="786.9" font-size="17.60" fill="#ececec" text-anchor="start" font-weight="normal" textLength="57.3" lengthAdjust="spacingAndGlyphs">50,7872</text>
<text x="1231.2" y="786.9" font-size="17.60" fill="#ececec" text-anchor="start" font-weight="normal" textLength="57.3" lengthAdjust="spacingAndGlyphs">82,5099</text>
<text x="1317.1" y="786.9" font-size="17.60" fill="#ececec" text-anchor="start" font-weight="normal" textLength="66.2" lengthAdjust="spacingAndGlyphs">121,7603</text>
<text x="1403.3" y="786.9" font-size="17.60" fill="#ececec" text-anchor="start" font-weight="normal" textLength="66.2" lengthAdjust="spacingAndGlyphs">170,1723</text>
<text x="1489.5" y="786.9" font-size="17.60" fill="#ececec" text-anchor="start" font-weight="normal" textLength="66.2" lengthAdjust="spacingAndGlyphs">230,8051</text>
<text x="1575.4" y="786.9" font-size="17.60" fill="#ececec" text-anchor="start" font-weight="normal" textLength="66.2" lengthAdjust="spacingAndGlyphs">302,4633</text>
<text x="1661.8" y="786.9" font-size="17.60" fill="#ececec" text-anchor="start" font-weight="normal" textLength="66.2" lengthAdjust="spacingAndGlyphs">382,2370</text>
<rect x="640.00" y="793.90" width="14.00" height="29.40" fill="#2d2d2d"/>
<rect x="654.00" y="793.90" width="1038.80" height="29.40" fill="#454545"/>
<text x="657.8" y="814.8" font-size="17.90" fill="#f4f4f4" text-anchor="start" font-weight="normal" textLength="123.0" lengthAdjust="spacingAndGlyphs">Gamma Log/Log</text>
<text x="791.6" y="814.8" font-size="17.60" fill="#f4f4f4" text-anchor="start" font-weight="normal" textLength="48.4" lengthAdjust="spacingAndGlyphs">1,3704</text>
<text x="887.4" y="814.8" font-size="17.60" fill="#f4f4f4" text-anchor="start" font-weight="normal" textLength="48.4" lengthAdjust="spacingAndGlyphs">2,1388</text>
<text x="973.3" y="814.8" font-size="17.60" fill="#f4f4f4" text-anchor="start" font-weight="normal" textLength="48.4" lengthAdjust="spacingAndGlyphs">2,1640</text>
<text x="1059.3" y="814.8" font-size="17.60" fill="#f4f4f4" text-anchor="start" font-weight="normal" textLength="48.4" lengthAdjust="spacingAndGlyphs">2,1549</text>
<text x="1145.2" y="814.8" font-size="17.60" fill="#f4f4f4" text-anchor="start" font-weight="normal" textLength="48.4" lengthAdjust="spacingAndGlyphs">2,1708</text>
<text x="1231.2" y="814.8" font-size="17.60" fill="#f4f4f4" text-anchor="start" font-weight="normal" textLength="48.4" lengthAdjust="spacingAndGlyphs">2,1695</text>
<text x="1317.1" y="814.8" font-size="17.60" fill="#f4f4f4" text-anchor="start" font-weight="normal" textLength="48.4" lengthAdjust="spacingAndGlyphs">2,1742</text>
<text x="1403.3" y="814.8" font-size="17.60" fill="#f4f4f4" text-anchor="start" font-weight="normal" textLength="48.4" lengthAdjust="spacingAndGlyphs">2,1549</text>
<text x="1489.5" y="814.8" font-size="17.60" fill="#f4f4f4" text-anchor="start" font-weight="normal" textLength="48.4" lengthAdjust="spacingAndGlyphs">2,1560</text>
<text x="1575.4" y="814.8" font-size="17.60" fill="#f4f4f4" text-anchor="start" font-weight="normal" textLength="48.4" lengthAdjust="spacingAndGlyphs">2,2265</text>
<text x="1661.8" y="814.8" font-size="17.60" fill="#f4f4f4" text-anchor="start" font-weight="normal" textLength="48.4" lengthAdjust="spacingAndGlyphs">2,2740</text>
<rect x="640.00" y="822.00" width="14.00" height="29.40" fill="#3b3b3b"/>
<rect x="654.00" y="822.00" width="1038.80" height="29.40" fill="#7f7f7f"/>
<text x="657.8" y="842.8" font-size="17.90" fill="#ececec" text-anchor="start" font-weight="normal" textLength="28.5" lengthAdjust="spacingAndGlyphs">CCT</text>
<text x="791.6" y="842.8" font-size="17.60" fill="#ececec" text-anchor="start" font-weight="normal" textLength="84.1" lengthAdjust="spacingAndGlyphs">16175,9101</text>
<text x="887.4" y="842.8" font-size="17.60" fill="#ececec" text-anchor="start" font-weight="normal" textLength="75.2" lengthAdjust="spacingAndGlyphs">7194,9273</text>
<text x="973.3" y="842.8" font-size="17.60" fill="#ececec" text-anchor="start" font-weight="normal" textLength="75.2" lengthAdjust="spacingAndGlyphs">6820,1475</text>
<text x="1059.3" y="842.8" font-size="17.60" fill="#ececec" text-anchor="start" font-weight="normal" textLength="75.2" lengthAdjust="spacingAndGlyphs">6821,3393</text>
<text x="1145.2" y="842.8" font-size="17.60" fill="#ececec" text-anchor="start" font-weight="normal" textLength="75.2" lengthAdjust="spacingAndGlyphs">6821,3957</text>
<text x="1231.2" y="842.8" font-size="17.60" fill="#ececec" text-anchor="start" font-weight="normal" textLength="75.2" lengthAdjust="spacingAndGlyphs">6895,7559</text>
<text x="1317.1" y="842.8" font-size="17.60" fill="#ececec" text-anchor="start" font-weight="normal" textLength="75.2" lengthAdjust="spacingAndGlyphs">6863,6747</text>
<text x="1403.3" y="842.8" font-size="17.60" fill="#ececec" text-anchor="start" font-weight="normal" textLength="75.2" lengthAdjust="spacingAndGlyphs">6843,1652</text>
<text x="1489.5" y="842.8" font-size="17.60" fill="#ececec" text-anchor="start" font-weight="normal" textLength="75.2" lengthAdjust="spacingAndGlyphs">6813,0881</text>
<text x="1575.4" y="842.8" font-size="17.60" fill="#ececec" text-anchor="start" font-weight="normal" textLength="75.2" lengthAdjust="spacingAndGlyphs">6869,3812</text>
<text x="1661.8" y="842.8" font-size="17.60" fill="#ececec" text-anchor="start" font-weight="normal" textLength="75.2" lengthAdjust="spacingAndGlyphs">6863,1201</text>
<rect x="640.00" y="851.00" width="14.00" height="29.40" fill="#2d2d2d"/>
<rect x="654.00" y="851.00" width="1038.80" height="29.40" fill="#454545"/>
<text x="657.8" y="871.2" font-size="17.90" fill="#f4f4f4" text-anchor="start" font-weight="normal" textLength="60.0" lengthAdjust="spacingAndGlyphs">ΔE 2000</text>
<text x="791.6" y="871.2" font-size="17.60" fill="#f4f4f4" text-anchor="start" font-weight="normal" textLength="48.4" lengthAdjust="spacingAndGlyphs">0,9865</text>
<text x="887.4" y="871.2" font-size="17.60" fill="#f4f4f4" text-anchor="start" font-weight="normal" textLength="48.4" lengthAdjust="spacingAndGlyphs">1,7841</text>
<text x="973.3" y="871.2" font-size="17.60" fill="#f4f4f4" text-anchor="start" font-weight="normal" textLength="48.4" lengthAdjust="spacingAndGlyphs">1,0427</text>
<text x="1059.3" y="871.2" font-size="17.60" fill="#f4f4f4" text-anchor="start" font-weight="normal" textLength="48.4" lengthAdjust="spacingAndGlyphs">1,1969</text>
<text x="1145.2" y="871.2" font-size="17.60" fill="#f4f4f4" text-anchor="start" font-weight="normal" textLength="48.4" lengthAdjust="spacingAndGlyphs">1,5022</text>
<text x="1231.2" y="871.2" font-size="17.60" fill="#f4f4f4" text-anchor="start" font-weight="normal" textLength="48.4" lengthAdjust="spacingAndGlyphs">2,1396</text>
<text x="1317.1" y="871.2" font-size="17.60" fill="#f4f4f4" text-anchor="start" font-weight="normal" textLength="48.4" lengthAdjust="spacingAndGlyphs">2,1795</text>
<text x="1403.3" y="871.2" font-size="17.60" fill="#f4f4f4" text-anchor="start" font-weight="normal" textLength="48.4" lengthAdjust="spacingAndGlyphs">2,2630</text>
<text x="1489.5" y="871.2" font-size="17.60" fill="#f4f4f4" text-anchor="start" font-weight="normal" textLength="48.4" lengthAdjust="spacingAndGlyphs">2,2510</text>
<text x="1575.4" y="871.2" font-size="17.60" fill="#f4f4f4" text-anchor="start" font-weight="normal" textLength="48.4" lengthAdjust="spacingAndGlyphs">2,9276</text>
<text x="1661.8" y="871.2" font-size="17.60" fill="#f4f4f4" text-anchor="start" font-weight="normal" textLength="48.4" lengthAdjust="spacingAndGlyphs">2,9300</text>
</g>
<rect x="1692.80" y="651.20" width="25.20" height="235.40" fill="#333"/>
<path d="M1692.8,681.8 H1707 Q1709.9,681.8 1709.9,684.8 V864.5 Q1709.9,867.6 1707,867.6 H1692.8 Z" fill="#585858"/>
<rect x="1695" y="683.3" width="13.4" height="14.2" rx="2.5" fill="url(#sbtn)" stroke="#8a8a8a" stroke-width="1"/>
<path d="M1696.9,693.8 L1701.8,688.6 L1706.8,693.8 Z" fill="#383838"/>
<rect x="1695.2" y="701" width="13.2" height="125.4" rx="6.5" fill="#414141"/>
<rect x="1694.8" y="851.8" width="13.4" height="13.6" rx="2.5" fill="url(#sbtn)" stroke="#8a8a8a" stroke-width="1"/>
<path d="M1696.9,855.6 L1706.4,855.6 L1701.6,861.4 Z" fill="#383838"/>
<path d="M654,868.2 H1692.8 V882.6 Q1692.8,885.6 1689.8,885.6 H657 Q654,885.6 654,882.6 Z" fill="#585858"/>
<rect x="655.2" y="869.8" width="13.6" height="14" rx="2.5" fill="url(#sbtn)" stroke="#8a8a8a" stroke-width="1"/>
<path d="M665.2,872.2 L665.2,881.6 L658.6,876.9 Z" fill="#383838"/>
<rect x="671.8" y="869.2" width="956.4" height="15.2" rx="7.5" fill="#424242"/>
<rect x="1677.6" y="869.8" width="13.4" height="14" rx="2.5" fill="url(#sbtn)" stroke="#8a8a8a" stroke-width="1"/>
<path d="M1681.6,872.2 L1681.6,881.6 L1688.2,876.9 Z" fill="#383838"/>
<rect x="0.00" y="886.40" width="1718.00" height="61.60" fill="#2a2a2a"/>
<path d="M0.0,948 V891.4 Q0.0,887 4.4,887 H120.4 Q124.8,887 124.8,891.4 V948 Z" fill="url(#tb)"/>
<rect x="4.9" y="892.3" width="115.0" height="35.9" rx="3" fill="#000000" stroke="#aaaaaa" stroke-opacity="0.85" stroke-width="1.4"/>
<text x="62.4" y="942.9" font-size="10.80" fill="#3c3c3c" text-anchor="middle" font-weight="bold" textLength="6.3" lengthAdjust="spacingAndGlyphs">0</text>
<path d="M126.8,948 V891.4 Q126.8,887 131.2,887 H247.2 Q251.6,887 251.6,891.4 V948 Z" fill="url(#tb)"/>
<rect x="131.7" y="892.3" width="115.0" height="35.9" rx="3" fill="#1a1a1a" stroke="#aaaaaa" stroke-opacity="0.85" stroke-width="1.4"/>
<text x="189.2" y="942.9" font-size="10.80" fill="#3c3c3c" text-anchor="middle" font-weight="bold" textLength="12.6" lengthAdjust="spacingAndGlyphs">10</text>
<path d="M253.6,948 V891.4 Q253.6,887 258.0,887 H374.0 Q378.4,887 378.4,891.4 V948 Z" fill="url(#tb)"/>
<rect x="258.5" y="892.3" width="115.0" height="35.9" rx="3" fill="#333333" stroke="#aaaaaa" stroke-opacity="0.85" stroke-width="1.4"/>
<text x="316.0" y="942.9" font-size="10.80" fill="#3c3c3c" text-anchor="middle" font-weight="bold" textLength="12.6" lengthAdjust="spacingAndGlyphs">20</text>
<path d="M380.4,948 V891.4 Q380.4,887 384.8,887 H500.8 Q505.2,887 505.2,891.4 V948 Z" fill="url(#tb)"/>
<rect x="385.3" y="892.3" width="115.0" height="35.9" rx="3" fill="#4d4d4d" stroke="#aaaaaa" stroke-opacity="0.85" stroke-width="1.4"/>
<text x="442.8" y="942.9" font-size="10.80" fill="#3c3c3c" text-anchor="middle" font-weight="bold" textLength="12.6" lengthAdjust="spacingAndGlyphs">30</text>
<path d="M507.2,948 V891.4 Q507.2,887 511.6,887 H627.6 Q632.0,887 632.0,891.4 V948 Z" fill="url(#tb)"/>
<rect x="512.1" y="892.3" width="115.0" height="35.9" rx="3" fill="#666666" stroke="#aaaaaa" stroke-opacity="0.85" stroke-width="1.4"/>
<text x="569.6" y="942.9" font-size="10.80" fill="#3c3c3c" text-anchor="middle" font-weight="bold" textLength="12.6" lengthAdjust="spacingAndGlyphs">40</text>
<path d="M634.0,948 V891.4 Q634.0,887 638.4,887 H754.4 Q758.8,887 758.8,891.4 V948 Z" fill="url(#tb)"/>
<rect x="638.9" y="892.3" width="115.0" height="35.9" rx="3" fill="#808080" stroke="#aaaaaa" stroke-opacity="0.85" stroke-width="1.4"/>
<text x="696.4" y="942.9" font-size="10.80" fill="#3c3c3c" text-anchor="middle" font-weight="bold" textLength="12.6" lengthAdjust="spacingAndGlyphs">50</text>
<path d="M760.8,948 V891.4 Q760.8,887 765.2,887 H881.2 Q885.6,887 885.6,891.4 V948 Z" fill="url(#tb)"/>
<rect x="765.7" y="892.3" width="115.0" height="35.9" rx="3" fill="#999999" stroke="#aaaaaa" stroke-opacity="0.85" stroke-width="1.4"/>
<text x="823.2" y="942.9" font-size="10.80" fill="#3c3c3c" text-anchor="middle" font-weight="bold" textLength="12.6" lengthAdjust="spacingAndGlyphs">60</text>
<path d="M887.6,948 V891.4 Q887.6,887 892.0,887 H1008.0 Q1012.4,887 1012.4,891.4 V948 Z" fill="url(#tb)"/>
<rect x="892.5" y="892.3" width="115.0" height="35.9" rx="3" fill="#b3b3b3" stroke="#aaaaaa" stroke-opacity="0.85" stroke-width="1.4"/>
<text x="950.0" y="942.9" font-size="10.80" fill="#3c3c3c" text-anchor="middle" font-weight="bold" textLength="12.6" lengthAdjust="spacingAndGlyphs">70</text>
<path d="M1014.4,948 V891.4 Q1014.4,887 1018.8,887 H1134.8 Q1139.2,887 1139.2,891.4 V948 Z" fill="url(#tb)"/>
<rect x="1019.3" y="892.3" width="115.0" height="35.9" rx="3" fill="#cccccc" stroke="#aaaaaa" stroke-opacity="0.85" stroke-width="1.4"/>
<text x="1076.8" y="942.9" font-size="10.80" fill="#3c3c3c" text-anchor="middle" font-weight="bold" textLength="12.6" lengthAdjust="spacingAndGlyphs">80</text>
<path d="M1141.2,948 V891.4 Q1141.2,887 1145.6,887 H1261.6 Q1266.0,887 1266.0,891.4 V948 Z" fill="url(#tb)"/>
<rect x="1146.1" y="892.3" width="115.0" height="35.9" rx="3" fill="#e6e6e6" stroke="#aaaaaa" stroke-opacity="0.85" stroke-width="1.4"/>
<text x="1203.6" y="942.9" font-size="10.80" fill="#3c3c3c" text-anchor="middle" font-weight="bold" textLength="12.6" lengthAdjust="spacingAndGlyphs">90</text>
<path d="M1268.0,948 V891.4 Q1268.0,887 1272.4,887 H1388.4 Q1392.8,887 1392.8,891.4 V948 Z" fill="url(#tbsel)"/>
<rect x="1272.9" y="892.3" width="115.0" height="35.9" rx="3" fill="#ffffff" stroke="#8a8a8a" stroke-opacity="0.85" stroke-width="1.4"/>
<text x="1330.4" y="942.9" font-size="10.80" fill="#d4d4d4" text-anchor="middle" font-weight="bold" textLength="18.9" lengthAdjust="spacingAndGlyphs">100</text>
<path d="M1395.8,948 V891 Q1395.8,887 1399.8,887 H1439.7 Q1443.7,887 1443.7,891 V948 Z" fill="url(#tb)"/>
<line x1="1395.80" y1="904.40" x2="1443.70" y2="904.40" stroke="#a8a8a8" stroke-width="1"/>
<line x1="1395.80" y1="905.50" x2="1443.70" y2="905.50" stroke="#343434" stroke-width="1.2"/>
<circle cx="1420.3" cy="895.9" r="6.9" fill="url(#knob2)"/>
<path d="M1416.6,897.6 L1420.5,893.3 L1424.4,897.6 Z" fill="#3a3a3a"/>
<rect x="1403.4" y="910.4" width="33.4" height="33.4" rx="5" fill="none" stroke="#9c9c9c" stroke-width="1"/>
<rect x="1405.5" y="912.5" width="29.2" height="29.2" rx="3.6" fill="url(#sq)" stroke="#1a1a1a" stroke-width="3"/>
<rect x="1413.00" y="919.90" width="13.90" height="7.20" fill="#1c1c1c"/>
<rect x="1413.00" y="927.10" width="13.90" height="6.70" fill="#000"/>
<path d="M1445.2,916.8 V891 Q1445.2,887 1449.2,887 H1491.1 V916.8 Z" fill="url(#tb2)"/>
<rect x="1492.10" y="887.00" width="43.90" height="29.80" fill="url(#tb2)"/>
<rect x="1537.00" y="887.00" width="43.90" height="29.80" fill="url(#tb2)"/>
<rect x="1581.90" y="887.00" width="44.20" height="29.80" fill="url(#tb2)"/>
<rect x="1627.10" y="887.00" width="43.70" height="29.80" fill="url(#tb2)"/>
<path d="M1671.3,916.8 V887 H1712 Q1718,887 1718,893 V916.8 Z" fill="url(#dk)"/>
<circle cx="1695" cy="901.9" r="9.8" fill="url(#dkk)"/>
<circle cx="1467.9" cy="901.9" r="9.8" fill="url(#knob)"/>
<circle cx="1514.0" cy="901.9" r="9.8" fill="url(#knob)"/>
<circle cx="1559.1" cy="901.9" r="9.8" fill="url(#knob)"/>
<circle cx="1604.0" cy="901.9" r="9.8" fill="url(#knob)"/>
<circle cx="1648.9" cy="901.9" r="9.8" fill="url(#knob)"/>
<rect x="1464.10" y="898.20" width="7.90" height="7.70" fill="#2c2c2c"/>
<path d="M1511,897.8 L1519.2,902.7 L1511,907.6 Z" fill="#2c2c2c"/>
<path d="M1556,898.2 H1554.2 V907 H1556 M1562.2,898.2 H1564 V907 H1562.2" fill="none" stroke="#2c2c2c" stroke-width="2"/>
<rect x="1556.90" y="901.10" width="1.70" height="1.70" fill="#2c2c2c"/>
<rect x="1559.70" y="901.10" width="1.70" height="1.70" fill="#2c2c2c"/>
<path d="M1604,902 C1602.2,898.9 1597.7,898.9 1597.7,902 C1597.7,905.1 1602.2,905.1 1604,902 C1605.8,898.9 1610.3,898.9 1610.3,902 C1610.3,905.1 1605.8,905.1 1604,902 Z" fill="none" stroke="#2c2c2c" stroke-width="1.7"/>
<path d="M1644.2,901.6 A4.7,4.7 0 0 1 1652,898.6" fill="none" stroke="#2c2c2c" stroke-width="2.1"/>
<path d="M1653.6,903 A4.7,4.7 0 0 1 1645.8,906" fill="none" stroke="#2c2c2c" stroke-width="2.1"/>
<path d="M1654.6,896.2 V901.4 H1649.4 Z" fill="#2c2c2c"/>
<path d="M1643.2,908.4 V903.2 H1648.4 Z" fill="#2c2c2c"/>
<path d="M1445.2,948 V922.4 Q1445.2,918.4 1449.2,918.4 H1580.9 V948 Z" fill="url(#tb2)"/>
<path d="M1581.9,948 V918.4 H1714 Q1718,918.4 1718,922.4 V948 Z" fill="url(#tb2)"/>
<circle cx="1475.8" cy="932.9" r="9.8" fill="url(#knob)"/>
<circle cx="1688.9" cy="932.9" r="9.8" fill="url(#knob)"/>
<path d="M1475.6,928.6 L1471.6,933.1 L1475.6,937.6 M1480.2,928.6 L1476.2,933.1 L1480.2,937.6" fill="none" stroke="#2c2c2c" stroke-width="1.4"/>
<path d="M1685,928.6 L1689,933.1 L1685,937.6 M1689.8,928.6 L1693.8,933.1 L1689.8,937.6" fill="none" stroke="#2c2c2c" stroke-width="1.4"/>
<text x="1503.0" y="940.3" font-size="20.60" fill="#303030" text-anchor="start" font-weight="normal" textLength="50.1" lengthAdjust="spacingAndGlyphs" stroke="#303030" stroke-width="0.45">Back</text>
<text x="1609.2" y="940.3" font-size="20.60" fill="#303030" text-anchor="start" font-weight="normal" textLength="51.1" lengthAdjust="spacingAndGlyphs" stroke="#303030" stroke-width="0.45">Next</text>
</svg>
</body></html>
